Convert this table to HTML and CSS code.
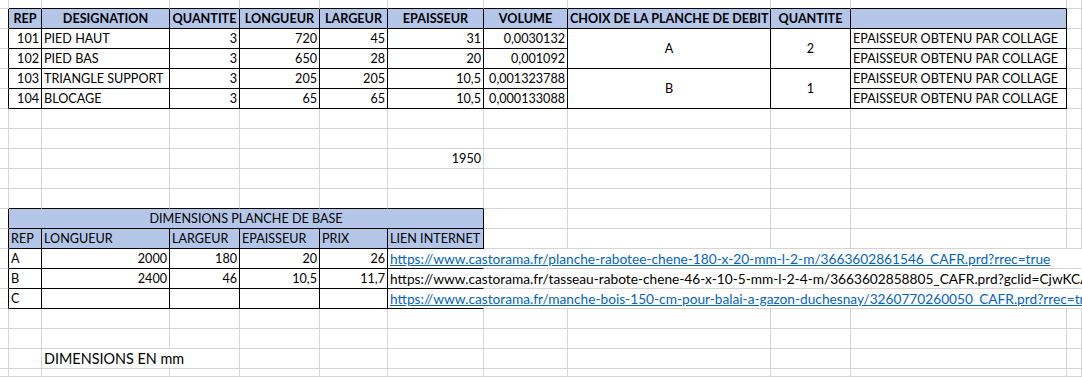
FILE: index.html
```html
<!DOCTYPE html>
<html lang="fr">
<head>
<meta charset="utf-8">
<title>Feuille</title>
<link rel="stylesheet" href="styles.css">
</head>
<body>
<div class="sheet">
  <!-- row 0 (partial) -->
  <div class="c"></div><div class="c bb"></div><div class="c bb"></div><div class="c bb"></div><div class="c bb"></div><div class="c bb"></div><div class="c bb"></div><div class="c bb"></div><div class="c bb"></div><div class="c bb"></div><div class="c bb"></div><div class="c"></div>
  <!-- row 1 header -->
  <div class="c br"></div>
  <div class="c t h b">REP</div><div class="c t h b">DESIGNATION</div><div class="c t h b">QUANTITE</div><div class="c t h b">LONGUEUR</div><div class="c t h b">LARGEUR</div><div class="c t h b">EPAISSEUR</div><div class="c t h b">VOLUME</div><div class="c t h b">CHOIX DE LA PLANCHE DE DEBIT</div><div class="c t h b">QUANTITE</div><div class="c t h b"></div>
  <div class="c"></div>
  <!-- row 2 -->
  <div class="c br"></div>
  <div class="c t r">101</div><div class="c t">PIED HAUT</div><div class="c t r">3</div><div class="c t r">720</div><div class="c t r">45</div><div class="c t r">31</div><div class="c t r">0,0030132</div>
  <div class="c t mid span2r">A</div><div class="c t mid span2r">2</div>
  <div class="c t">EPAISSEUR OBTENU PAR COLLAGE</div>
  <div class="c"></div>
  <!-- row 3 -->
  <div class="c br"></div>
  <div class="c t r">102</div><div class="c t">PIED BAS</div><div class="c t r">3</div><div class="c t r">650</div><div class="c t r">28</div><div class="c t r">20</div><div class="c t r">0,001092</div>
  <div class="c t">EPAISSEUR OBTENU PAR COLLAGE</div>
  <div class="c"></div>
  <!-- row 4 -->
  <div class="c br"></div>
  <div class="c t r">103</div><div class="c t">TRIANGLE SUPPORT</div><div class="c t r">3</div><div class="c t r">205</div><div class="c t r">205</div><div class="c t r">10,5</div><div class="c t r">0,001323788</div>
  <div class="c t mid span2r">B</div><div class="c t mid span2r">1</div>
  <div class="c t">EPAISSEUR OBTENU PAR COLLAGE</div>
  <div class="c"></div>
  <!-- row 5 -->
  <div class="c br"></div>
  <div class="c t r">104</div><div class="c t">BLOCAGE</div><div class="c t r">3</div><div class="c t r">65</div><div class="c t r">65</div><div class="c t r">10,5</div><div class="c t r">0,000133088</div>
  <div class="c t">EPAISSEUR OBTENU PAR COLLAGE</div>
  <div class="c"></div>
  <!-- row 6 -->
  <div class="c"></div><div class="c"></div><div class="c"></div><div class="c"></div><div class="c"></div><div class="c"></div><div class="c"></div><div class="c"></div><div class="c"></div><div class="c"></div><div class="c"></div><div class="c"></div>
  <!-- row 7 -->
  <div class="c"></div><div class="c"></div><div class="c"></div><div class="c"></div><div class="c"></div><div class="c"></div><div class="c"></div><div class="c"></div><div class="c"></div><div class="c"></div><div class="c"></div><div class="c"></div>
  <!-- row 8 -->
  <div class="c"></div><div class="c"></div><div class="c"></div><div class="c"></div><div class="c"></div><div class="c"></div><div class="c r">1950</div><div class="c"></div><div class="c"></div><div class="c"></div><div class="c"></div><div class="c"></div>
  <!-- row 9 -->
  <div class="c"></div><div class="c"></div><div class="c"></div><div class="c"></div><div class="c"></div><div class="c"></div><div class="c"></div><div class="c"></div><div class="c"></div><div class="c"></div><div class="c"></div><div class="c"></div>
  <!-- row 10 -->
  <div class="c"></div><div class="c bb"></div><div class="c bb"></div><div class="c bb"></div><div class="c bb"></div><div class="c bb"></div><div class="c bb"></div><div class="c"></div><div class="c"></div><div class="c"></div><div class="c"></div><div class="c"></div>
  <!-- row 11 title -->
  <div class="c br"></div>
  <div class="c t h ctr span6">DIMENSIONS PLANCHE DE BASE</div>
  <div class="c"></div><div class="c"></div><div class="c"></div><div class="c"></div><div class="c"></div>
  <!-- row 12 header 2 -->
  <div class="c br"></div>
  <div class="c t h">REP</div><div class="c t h">LONGUEUR</div><div class="c t h">LARGEUR</div><div class="c t h">EPAISSEUR</div><div class="c t h">PRIX</div><div class="c t h">LIEN INTERNET</div>
  <div class="c"></div><div class="c"></div><div class="c"></div><div class="c"></div><div class="c"></div>
  <!-- row 13 -->
  <div class="c br"></div>
  <div class="c t">A</div><div class="c t r">2000</div><div class="c t r">180</div><div class="c t r">20</div><div class="c t r">26</div>
  <div class="c bb nr ov"><span class="lnk">https://www.castorama.fr/planche-rabotee-chene-180-x-20-mm-l-2-m/3663602861546_CAFR.prd?rrec=true</span></div>
  <div class="c nr"></div><div class="c nr"></div><div class="c nr"></div><div class="c nr"></div><div class="c nr"></div>
  <!-- row 14 -->
  <div class="c br"></div>
  <div class="c t">B</div><div class="c t r">2400</div><div class="c t r">46</div><div class="c t r">10,5</div><div class="c t r">11,7</div>
  <div class="c bb nr ov">https://www.castorama.fr/tasseau-rabote-chene-46-x-10-5-mm-l-2-4-m/3663602858805_CAFR.prd?gclid=CjwKCAjw</div>
  <div class="c nr"></div><div class="c nr"></div><div class="c nr"></div><div class="c nr"></div><div class="c nr"></div>
  <!-- row 15 -->
  <div class="c br"></div>
  <div class="c t">C</div><div class="c t"></div><div class="c t"></div><div class="c t"></div><div class="c t"></div>
  <div class="c bb nr ov"><span class="lnk">https://www.castorama.fr/manche-bois-150-cm-pour-balai-a-gazon-duchesnay/3260770260050_CAFR.prd?rrec=true</span></div>
  <div class="c nr"></div><div class="c nr"></div><div class="c nr"></div><div class="c nr"></div><div class="c nr"></div>
  <!-- row 16 -->
  <div class="c"></div><div class="c"></div><div class="c"></div><div class="c"></div><div class="c"></div><div class="c"></div><div class="c"></div><div class="c"></div><div class="c"></div><div class="c"></div><div class="c"></div><div class="c"></div>
  <!-- row 17 -->
  <div class="c"></div><div class="c"></div><div class="c"></div><div class="c"></div><div class="c"></div><div class="c"></div><div class="c"></div><div class="c"></div><div class="c"></div><div class="c"></div><div class="c"></div><div class="c"></div>
  <!-- row 18 -->
  <div class="c"></div><div class="c"></div><div class="c span2 note">DIMENSIONS EN mm</div><div class="c"></div><div class="c"></div><div class="c"></div><div class="c"></div><div class="c"></div><div class="c"></div><div class="c"></div><div class="c"></div>
  <!-- row 19 (partial) -->
  <div class="c"></div><div class="c"></div><div class="c"></div><div class="c"></div><div class="c"></div><div class="c"></div><div class="c"></div><div class="c"></div><div class="c"></div><div class="c"></div><div class="c"></div><div class="c"></div>
</div>
</body>
</html>
```
FILE: styles.css
```css
html, body {
  margin: 0;
  padding: 0;
  background: #ffffff;
}

.sheet {
  display: grid;
  grid-template-columns: 9px 33px 128px 70px 80px 68px 96px 84px 203px 80px 216px 1fr;
  grid-template-rows: 9px repeat(18, 20px) 1fr;
  width: 1082px;
  height: 377px;
  overflow: hidden;
  font-family: "Lato", "Liberation Sans", sans-serif;
  font-size: 12.6px;
  color: #000000;
}

.c {
  border-right: 1px solid #d4d4d4;
  border-bottom: 1px solid #d4d4d4;
  padding: 1px 2px 0;
  line-height: 18px;
  white-space: nowrap;
  overflow: hidden;
  min-width: 0;
}

.t { border-color: #000000; }
.bb { border-bottom-color: #000000; }
.br { border-right-color: #000000; }
.nr { border-right-color: transparent; }
.h { background: #b4c6e7; }
.b { font-weight: 700; text-align: center; }
.r { text-align: right; }
.ctr { text-align: center; }
.ov { overflow: visible; position: relative; z-index: 1; font-size: 13.7px; }
.lnk { color: #0563c1; text-decoration: underline; }
.note { font-size: 14.4px; }

.mid {
  display: flex;
  align-items: center;
  justify-content: center;
}
.span2r { grid-row: span 2; }
.span6 { grid-column: span 6; }
.span2 { grid-column: span 2; }
```
